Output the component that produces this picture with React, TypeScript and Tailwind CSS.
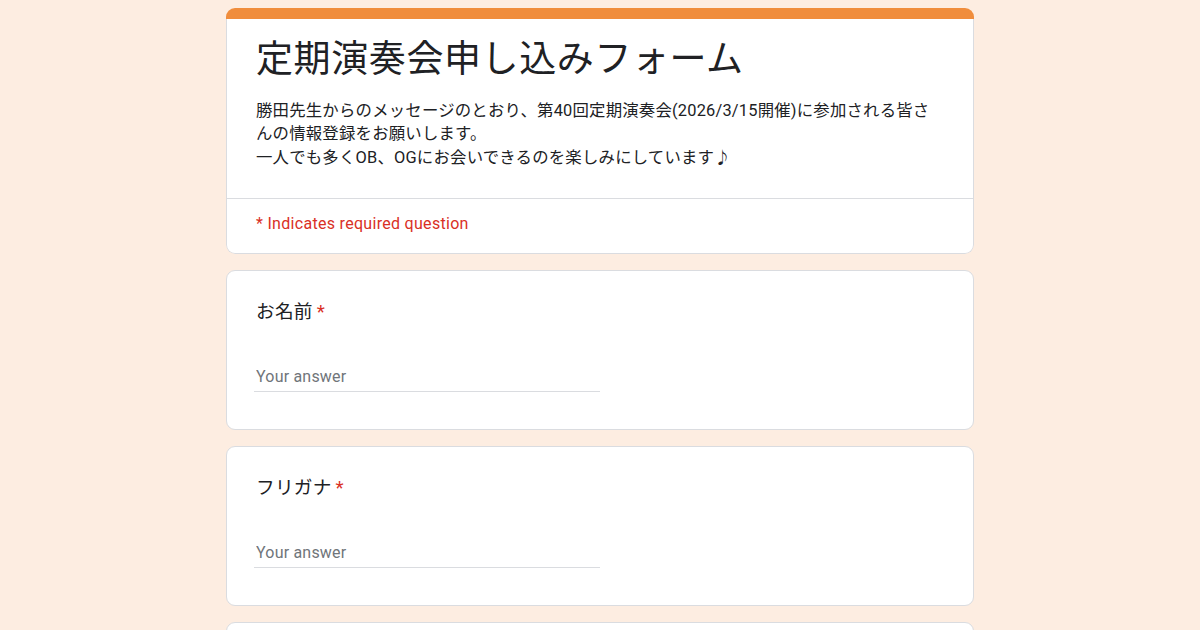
import React from 'react';

const font = { fontFamily: 'Roboto, "Noto Sans CJK JP", sans-serif' };

const QuestionCard = ({ label }: { label: string }) => (
  <div className="bg-white border border-[#dadce0] rounded-[9px] pl-[29px] pr-[29px] pt-[28px] pb-[37px]">
    <div className="text-[18.7px] leading-[26px] text-[#202124] tracking-[0.2px]">
      {label}
      <span className="text-[#d93025] ml-[4px]">*</span>
    </div>
    <div className="mt-[42px] w-[346px] -ml-[2px] pl-[2px] pb-[4px] border-b border-[#dadce0]">
      <input
        className="block w-full h-[20px] p-0 outline-none bg-transparent text-[16px] leading-[20px] tracking-[0.2px] text-[#202124] placeholder:text-[#70757a]"
        placeholder="Your answer"
        style={font}
      />
    </div>
  </div>
);

export default function App() {
  return (
    <div className="h-[630px] overflow-hidden bg-[#fdede1] pt-[8px]" style={font}>
      <div className="w-[748px] mx-auto flex flex-col gap-[16px]">
        <div className="rounded-[9px] overflow-hidden">
          <div className="h-[11px] bg-[#f08d3c]" />
          <div className="bg-white border-x border-b border-[#dadce0] rounded-b-[9px]">
            <div className="pl-[29px] pr-[29px] pt-[19px] pb-[29px]">
              <h1 className="text-[37px] leading-[44px] text-[#202124] tracking-[0.6px]">
                定期演奏会申し込みフォーム
              </h1>
              <p className="mt-[17px] text-[16.4px] leading-[23.4px] text-[#202124] tracking-[0.2px]">
                勝田先生からのメッセージのとおり、第40回定期演奏会(2026/3/15開催)に参加される皆さんの情報登録をお願いします。
                <br />
                一人でも多くOB、OGにお会いできるのを楽しみにしています♪
              </p>
            </div>
            <div className="border-t border-[#dadce0] pl-[29px] pt-[13px] pb-[17px]">
              <span className="text-[16px] leading-[20px] tracking-[0.3px] text-[#d93025]">
                * Indicates required question
              </span>
            </div>
          </div>
        </div>
        <QuestionCard label="お名前" />
        <QuestionCard label="フリガナ" />
        {/* next question card, only its top edge is in view */}
        <div className="h-[160px] bg-white border border-[#dadce0] rounded-[9px]" />
      </div>
    </div>
  );
}
